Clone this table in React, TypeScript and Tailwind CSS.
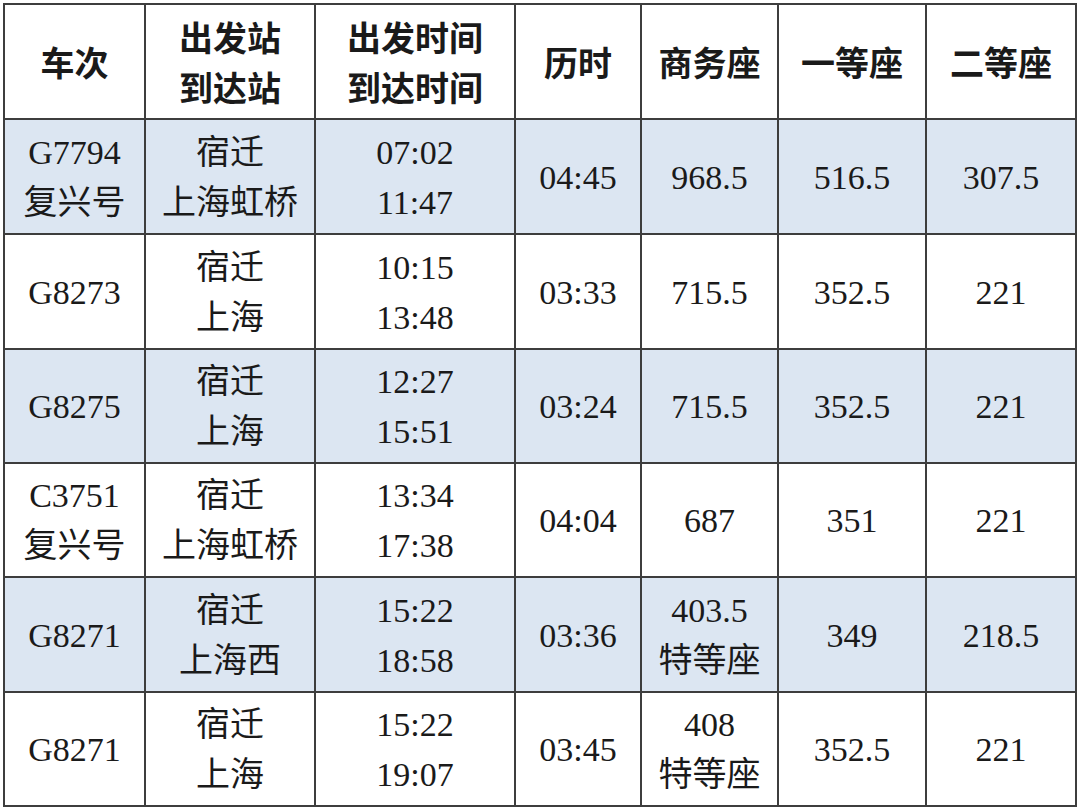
import React from 'react';

type Row = {
  train: string[];
  stations: string[];
  times: string[];
  duration: string;
  business: string[];
  first: string;
  second: string;
  shaded: boolean;
};

const rows: Row[] = [
  { train: ['G7794', '复兴号'], stations: ['宿迁', '上海虹桥'], times: ['07:02', '11:47'], duration: '04:45', business: ['968.5'], first: '516.5', second: '307.5', shaded: true },
  { train: ['G8273'], stations: ['宿迁', '上海'], times: ['10:15', '13:48'], duration: '03:33', business: ['715.5'], first: '352.5', second: '221', shaded: false },
  { train: ['G8275'], stations: ['宿迁', '上海'], times: ['12:27', '15:51'], duration: '03:24', business: ['715.5'], first: '352.5', second: '221', shaded: true },
  { train: ['C3751', '复兴号'], stations: ['宿迁', '上海虹桥'], times: ['13:34', '17:38'], duration: '04:04', business: ['687'], first: '351', second: '221', shaded: false },
  { train: ['G8271'], stations: ['宿迁', '上海西'], times: ['15:22', '18:58'], duration: '03:36', business: ['403.5', '特等座'], first: '349', second: '218.5', shaded: true },
  { train: ['G8271'], stations: ['宿迁', '上海'], times: ['15:22', '19:07'], duration: '03:45', business: ['408', '特等座'], first: '352.5', second: '221', shaded: false },
];

const headers = [['车次'], ['出发站', '到达站'], ['出发时间', '到达时间'], ['历时'], ['商务座'], ['一等座'], ['二等座']];

function HeadCell({ lines }: { lines: string[] }) {
  return (
    <div className="flex flex-col items-center justify-center border-r-2 border-b-2 border-[#3d3d3d] bg-white leading-[50px] text-[34px] text-[#1a1a1a] font-bold font-['Noto_Sans_CJK_SC',sans-serif]">
      {lines.map((l, i) => (
        <span key={i} className="whitespace-nowrap">{l}</span>
      ))}
    </div>
  );
}

function Cell({ lines, shaded }: { lines: string[]; shaded?: boolean }) {
  return (
    <div
      className={`flex flex-col items-center justify-center border-r-2 border-b-2 border-[#3d3d3d] pt-[2px] leading-[50px] text-[34px] text-[#1a1a1a] ${
        shaded ? 'bg-[#dce6f2]' : 'bg-white'
      }`}
    >
      {lines.map((l, i) => (
        <span key={i} className="whitespace-nowrap">{l}</span>
      ))}
    </div>
  );
}

export default function App() {
  return (
    <div className="w-[1080px] h-[809px] bg-white pl-[3px] pt-[3px]">
      <div className="grid grid-cols-[141px_170px_200px_126px_137px_148px_150px] grid-rows-[115px_115px_115px_114px_114px_115px_114px] w-fit border-l-2 border-t-2 border-[#3d3d3d] font-['Liberation_Serif','Noto_Sans_CJK_SC',serif]">
        {headers.map((h, i) => (
          <HeadCell key={i} lines={h} />
        ))}
        {rows.map((r, i) => (
          <React.Fragment key={i}>
            <Cell lines={r.train} shaded={r.shaded} />
            <Cell lines={r.stations} shaded={r.shaded} />
            <Cell lines={r.times} shaded={r.shaded} />
            <Cell lines={[r.duration]} shaded={r.shaded} />
            <Cell lines={r.business} shaded={r.shaded} />
            <Cell lines={[r.first]} shaded={r.shaded} />
            <Cell lines={[r.second]} shaded={r.shaded} />
          </React.Fragment>
        ))}
      </div>
    </div>
  );
}
